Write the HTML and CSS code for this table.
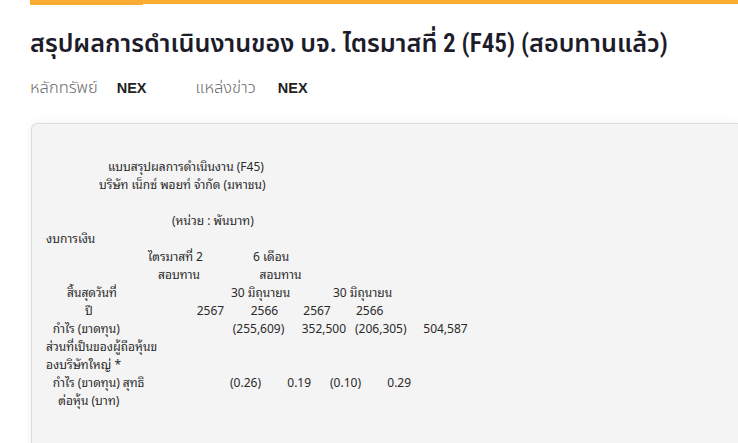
FILE: index.html
```html
<!DOCTYPE html>
<html lang="th">
<head>
<meta charset="utf-8">
<title>F45</title>
<link rel="stylesheet" href="styles.css">
</head>
<body>
<div class="page">
  <div class="tabbar"><div class="tab-active"></div></div>
  <h1 class="title">สรุปผลการดำเนินงานของ บจ. ไตรมาสที่ 2 (F45) (สอบทานแล้ว)</h1>
  <div class="meta">
    <span class="meta-label">หลักทรัพย์</span><span class="meta-value">NEX</span>
    <span class="meta-label second">แหล่งข่าว</span><span class="meta-value">NEX</span>
  </div>
  <div class="card">
    <div class="report">
      <div class="ln head1"><span>แบบสรุปผลการดำเนินงาน (F45)</span></div>
      <div class="ln head2"><span>บริษัท เน็กซ์ พอยท์ จำกัด (มหาชน)</span></div>
      <div class="ln"></div>
      <div class="ln unit"><span>(หน่วย : พันบาท)</span></div>
      <div class="ln"><span>งบการเงิน</span></div>
      <div class="ln period"><span>ไตรมาสที่ 2</span><span>6 เดือน</span></div>
      <div class="ln review"><span>สอบทาน</span><span>สอบทาน</span></div>
      <div class="ln ending"><span>สิ้นสุดวันที่</span><span>30 มิถุนายน</span><span>30 มิถุนายน</span></div>
      <div class="ln years"><span>ปี</span><span>2567</span><span>2566</span><span>2567</span><span>2566</span></div>
      <div class="ln profit"><span>กำไร (ขาดทุน)</span><span>(255,609)</span><span>352,500</span><span>(206,305)</span><span>504,587</span></div>
      <div class="ln"><span>ส่วนที่เป็นของผู้ถือหุ้นข</span></div>
      <div class="ln"><span>องบริษัทใหญ่ *</span></div>
      <div class="ln eps"><span>กำไร (ขาดทุน) สุทธิ</span><span>(0.26)</span><span>0.19</span><span>(0.10)</span><span>0.29</span></div>
      <div class="ln per-share"><span>ต่อหุ้น (บาท)</span></div>
    </div>
  </div>
</div>
</body>
</html>
```
FILE: styles.css
```css
html, body {
  margin: 0;
  padding: 0;
  background: #ffffff;
}
body {
  font-family: "Noto Sans Thai", "Noto Sans", sans-serif;
  color: #222;
  overflow: hidden;
}
.page {
  padding-left: 30px;
}
.tabbar {
  height: 4px;
  background: #fbad33;
}
.tab-active {
  width: 113px;
  height: 5px;
  background: #fbad33;
}
.title {
  margin: 22px 0 0 0;
  font-family: "Roboto", "Noto Sans Thai", sans-serif;
  font-size: 25.2px;
  line-height: 36px;
  font-weight: 600;
  font-stretch: 86%;
  color: #1c1c2b;
}
.meta {
  margin-top: 13px;
  display: flex;
  align-items: baseline;
  line-height: 26px;
}
.meta-label {
  font-family: "Noto Sans Thai", "Roboto", sans-serif;
  font-size: 16.5px;
  font-weight: 300;
  color: #6b6b6b;
  margin-right: 19px;
}
.meta-label.second {
  margin-left: 49px;
  margin-right: 22px;
}
.meta-value {
  font-family: "Liberation Sans", Arial, sans-serif;
  font-weight: 700;
  font-size: 14.5px;
  color: #222;
}
.card {
  margin-top: 22px;
  margin-left: 1px;
  background: #f4f4f4;
  border: 1px solid #dddbe6;
  border-right: none;
  border-radius: 6px 0 0 6px;
  box-shadow: 0 0 12px rgba(0,0,0,0.06);
  padding: 34px 0 30px 14px;
  min-height: 400px;
}
.report {
  font-family: "Noto Sans", "Noto Sans Thai Looped", sans-serif;
  font-size: 12px;
  line-height: 18px;
  color: #2a2a2a;
}
.ln {
  display: flex;
  height: 18px;
  white-space: pre;
}
.ln > span {
  flex: none;
}
.head1 { padding-left: 62px; }
.head2 { padding-left: 53px; }
.unit { padding-left: 126px; }

.period { padding-left: 102px; }
.period > span:nth-child(1) { width: 105px; }

.review { padding-left: 112px; }
.review > span:nth-child(1) { width: 101.5px; }

.ending { padding-left: 21px; }
.ending > span:nth-child(1) { width: 164px; }
.ending > span:nth-child(2) { width: 102px; }

.years { padding-left: 39px; }
.years > span:nth-child(1) { width: 111.7px; }
.years > span:nth-child(2) { width: 54px; }
.years > span:nth-child(3) { width: 52.6px; }
.years > span:nth-child(4) { width: 52.7px; }

.profit { padding-left: 6.7px; }
.profit > span:nth-child(1) { width: 180px; }
.profit > span:nth-child(2) { width: 69px; }
.profit > span:nth-child(3) { width: 53.3px; }
.profit > span:nth-child(4) { width: 68.3px; }

.eps { padding-left: 6.7px; }
.eps > span:nth-child(1) { width: 177.3px; }
.eps > span:nth-child(2) { width: 57.3px; }
.eps > span:nth-child(3) { width: 42.7px; }
.eps > span:nth-child(4) { width: 57.3px; }

.per-share { padding-left: 12.3px; }
```
